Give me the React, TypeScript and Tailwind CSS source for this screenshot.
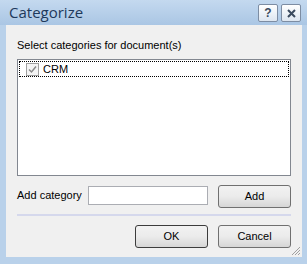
import React from "react";

const font = { fontFamily: "'Liberation Sans', Arial, sans-serif" };

function WinButton({ label, focused }: { label: string; focused?: boolean }) {
  return (
    <button
      className={`h-[23px] w-[73px] rounded-[3px] border ${
        focused ? "border-[#3c3c3c]" : "border-[#707070]"
      } bg-gradient-to-b from-[#f2f2f2] via-[#ebebeb] to-[#d6d6d6] text-[11px] leading-none text-black`}
    >
      {label}
    </button>
  );
}

export default function App() {
  return (
    <div className="w-[307px] h-[264px] bg-[#b9d1ea] flex flex-col" style={font}>
      {/* title bar */}
      <div className="h-[25px] shrink-0 flex items-center pl-[9px] pr-[6px] bg-gradient-to-b from-[#c4d9ef] to-[#aac6e4]">
        <span
          className="text-[15px] text-[#1e395b] leading-none"
          style={{ fontFamily: "'Open Sans', 'Liberation Sans', sans-serif" }}
        >
          Categorize
        </span>
        <div className="ml-auto flex gap-[3px] mt-[1px]">
          <div className="w-[20px] h-[18px] border border-[#7d8da3] rounded-[2px] bg-gradient-to-b from-[#ffffff] to-[#dde6f0] flex items-center justify-center text-[12px] font-bold text-[#3a4a5e]">
            ?
          </div>
          <div className="w-[20px] h-[18px] border border-[#7d8da3] rounded-[2px] bg-gradient-to-b from-[#ffffff] to-[#dde6f0] flex items-center justify-center">
            <svg width="9" height="9" viewBox="0 0 9 9">
              <path d="M1 1L8 8M8 1L1 8" stroke="#3a4a5e" strokeWidth="2" />
            </svg>
          </div>
        </div>
      </div>

      {/* client */}
      <div className="h-[232px] ml-[6px] mr-[5px] bg-[#f0f0f0] flex flex-col px-[11px] pt-[14px] relative">
        <div className="h-[13px] text-[11px] text-black leading-[13px]">Select categories for document(s)</div>

        <div className="mt-[7px] h-[117px] border border-[#828790] bg-white p-[1px]">
          <div className="h-[16px] border border-dotted border-black flex items-center pl-[6px] gap-[4px]">
            <div className="w-[13px] h-[13px] border border-[#a0a0a0] bg-[#f4f4f4] flex items-center justify-center">
              <svg width="9" height="9" viewBox="0 0 9 9">
                <path d="M1 4.5L3.5 7L8 1.5" stroke="#8a8a8a" strokeWidth="1.5" fill="none" />
              </svg>
            </div>
            <span className="text-[11px] leading-none text-black">CRM</span>
          </div>
        </div>

        <div className="mt-[8px] h-[23px] flex items-center">
          <span className="text-[11px] leading-none text-black w-[71px] whitespace-nowrap">Add category</span>
          <div className="w-[120px] h-[19px] border border-[#abadb3] bg-white" />
          <div className="ml-auto">
            <WinButton label="Add" />
          </div>
        </div>

        <div className="mt-[7px] h-[2px] bg-[#d5d8ec]" />

        <div className="mt-[9px] flex justify-end gap-[10px]">
          <WinButton label="OK" focused />
          <WinButton label="Cancel" />
        </div>

        <svg className="absolute right-[1px] bottom-[1px]" width="11" height="11" viewBox="0 0 11 11">
          <path d="M10 2L2 10M10 5L5 10M10 8L8 10" stroke="#a0a0a0" strokeWidth="1" />
        </svg>
      </div>
    </div>
  );
}
